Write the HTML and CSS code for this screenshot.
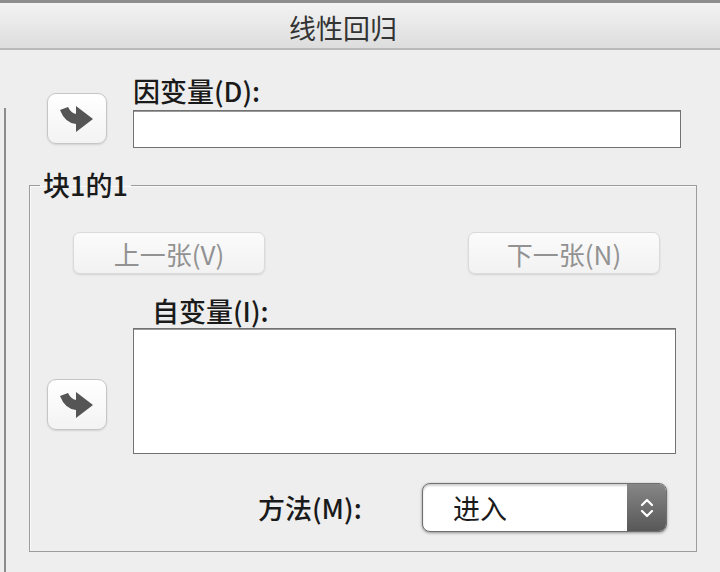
FILE: index.html
```html
<!DOCTYPE html>
<html lang="zh-CN">
<head>
  <meta charset="UTF-8" />
  <title>线性回归</title>
  <link rel="stylesheet" href="styles.css">
</head>
<body>
  <div class="titlebar">线性回归</div>

  <div class="window">
    <div class="edge"></div>

    <div class="content">
      <div class="dep-row">
        <button type="button" class="move-btn">
          <svg width="34" height="28" viewBox="0 0 34 28"><path d="M0 5 L8 2 Q11 8 16 9 L16 1 L33 14 L16 27 L16 19 Q5 18 0 5 Z" fill="#555"/></svg>
        </button>
        <div class="dep-field">
          <label class="field-label">因变量(D):</label>
          <div class="text-box"></div>
        </div>
      </div>

      <fieldset class="block">
        <legend>块1的1</legend>

        <div class="nav-row">
          <button type="button" class="nav-btn" disabled>上一张(V)</button>
          <button type="button" class="nav-btn" disabled>下一张(N)</button>
        </div>

        <div class="indep-row">
          <button type="button" class="move-btn indep-btn">
            <svg width="34" height="28" viewBox="0 0 34 28"><path d="M0 5 L8 2 Q11 8 16 9 L16 1 L33 14 L16 27 L16 19 Q5 18 0 5 Z" fill="#555"/></svg>
          </button>
          <div class="indep-field">
            <label class="field-label indep-label">自变量(I):</label>
            <div class="list-box"></div>
          </div>
        </div>

        <div class="method-row">
          <label class="method-label">方法(M):</label>
          <div class="select">
            <span class="select-value">进入</span>
            <span class="stepper">
              <svg width="14" height="24" viewBox="0 0 14 24"><path d="M2 9 L7 4 L12 9 M2 15 L7 20 L12 15" fill="none" stroke="#fff" stroke-width="2.2" stroke-linecap="round" stroke-linejoin="round"/></svg>
            </span>
          </div>
        </div>
      </fieldset>
    </div>
  </div>
</body>
</html>
```

FILE: styles.css
```css
* {
  margin: 0;
  padding: 0;
  box-sizing: border-box;
  font-family: 'Noto Sans CJK SC', 'Noto Sans', sans-serif;
}

body {
  background-color: #eeeeee;
  color: #1e1e1e;
  width: 720px;
  height: 572px;
  overflow: hidden;
}

.titlebar {
  height: 50px;
  border-top: 3px solid #8e8e8e;
  border-bottom: 2px solid #b9b9b9;
  background: linear-gradient(#f3f3f3, #dddddd);
  display: flex;
  justify-content: center;
  align-items: center;
  padding: 4px 34px 0 0;
  font-size: 27px;
  color: #333;
}

.window {
  display: flex;
  height: 522px;
}

.edge {
  width: 6px;
  margin-top: 58px;
  border-right: 2px solid #8c8c8c;
}

.content {
  flex: 1;
}

.field-label {
  display: block;
  font-size: 27px;
  line-height: 30px;
  font-weight: 500;
  color: #1a1a1a;
}

.move-btn {
  width: 60px;
  height: 51px;
  border: 1px solid #c6c6c6;
  border-radius: 9px;
  background: linear-gradient(#ffffff, #f3f3f3);
  box-shadow: 0 1px 2px rgba(0, 0, 0, 0.12);
  display: flex;
  justify-content: center;
  align-items: center;
  flex-shrink: 0;
}

/* dependent variable */
.dep-row {
  display: flex;
  margin-top: 26px;
  margin-left: 41px;
}

.dep-row .move-btn {
  margin-top: 17px;
  margin-right: 26px;
}

.dep-field {
  width: 548px;
}

.text-box {
  height: 38px;
  margin-top: 4px;
  background-color: #fff;
  border: 1px solid #727272;
  box-shadow: inset 0 1px 0 #9a9a9a;
}

/* block group */
.block {
  margin-top: 23px;
  margin-left: 23px;
  width: 668px;
  border: 1px solid #9c9c9c;
  box-shadow: inset 1px 1px 0 #fafafa;
  padding: 0 0 19px 0;
}

.block legend {
  margin-left: 10px;
  padding: 0 3px;
  font-size: 27px;
  line-height: 28px;
  font-weight: 500;
  color: #1a1a1a;
}

.nav-row {
  display: flex;
  justify-content: space-between;
  margin-top: 33px;
  padding: 0 36px 0 43px;
}

.nav-btn {
  width: 192px;
  height: 42px;
  border: 1px solid #dadada;
  border-radius: 7px;
  background: linear-gradient(#fbfbfb, #f2f2f2);
  box-shadow: 0 1px 2px rgba(0, 0, 0, 0.12);
  font-size: 26px;
  color: #929292;
}

.indep-row {
  display: flex;
  margin-top: 22px;
  margin-left: 17px;
}

.indep-btn {
  margin-top: 83px;
  margin-right: 26px;
}

.indep-label {
  padding-left: 19px;
  margin-bottom: 2px;
}

.list-box {
  width: 543px;
  height: 126px;
  background-color: #fff;
  border: 1px solid #727272;
  box-shadow: inset 0 1px 0 #9a9a9a;
}

/* method */
.method-row {
  display: flex;
  align-items: center;
  margin-top: 29px;
  margin-left: 228px;
}

.method-label {
  width: 164px;
  font-size: 27px;
  font-weight: 500;
  color: #1a1a1a;
}

.select {
  display: flex;
  width: 245px;
  height: 49px;
  border: 1px solid #6f6f6f;
  border-radius: 8px;
  background-color: #fff;
  box-shadow: 0 1px 3px rgba(0, 0, 0, 0.4), inset 0 2px 2px rgba(0, 0, 0, 0.18);
  overflow: hidden;
}

.select-value {
  flex: 1;
  display: flex;
  align-items: center;
  padding-left: 30px;
  font-size: 27px;
  color: #1a1a1a;
}

.stepper {
  width: 39px;
  display: flex;
  justify-content: center;
  align-items: center;
  background: linear-gradient(#868686, #585858);
}
```
